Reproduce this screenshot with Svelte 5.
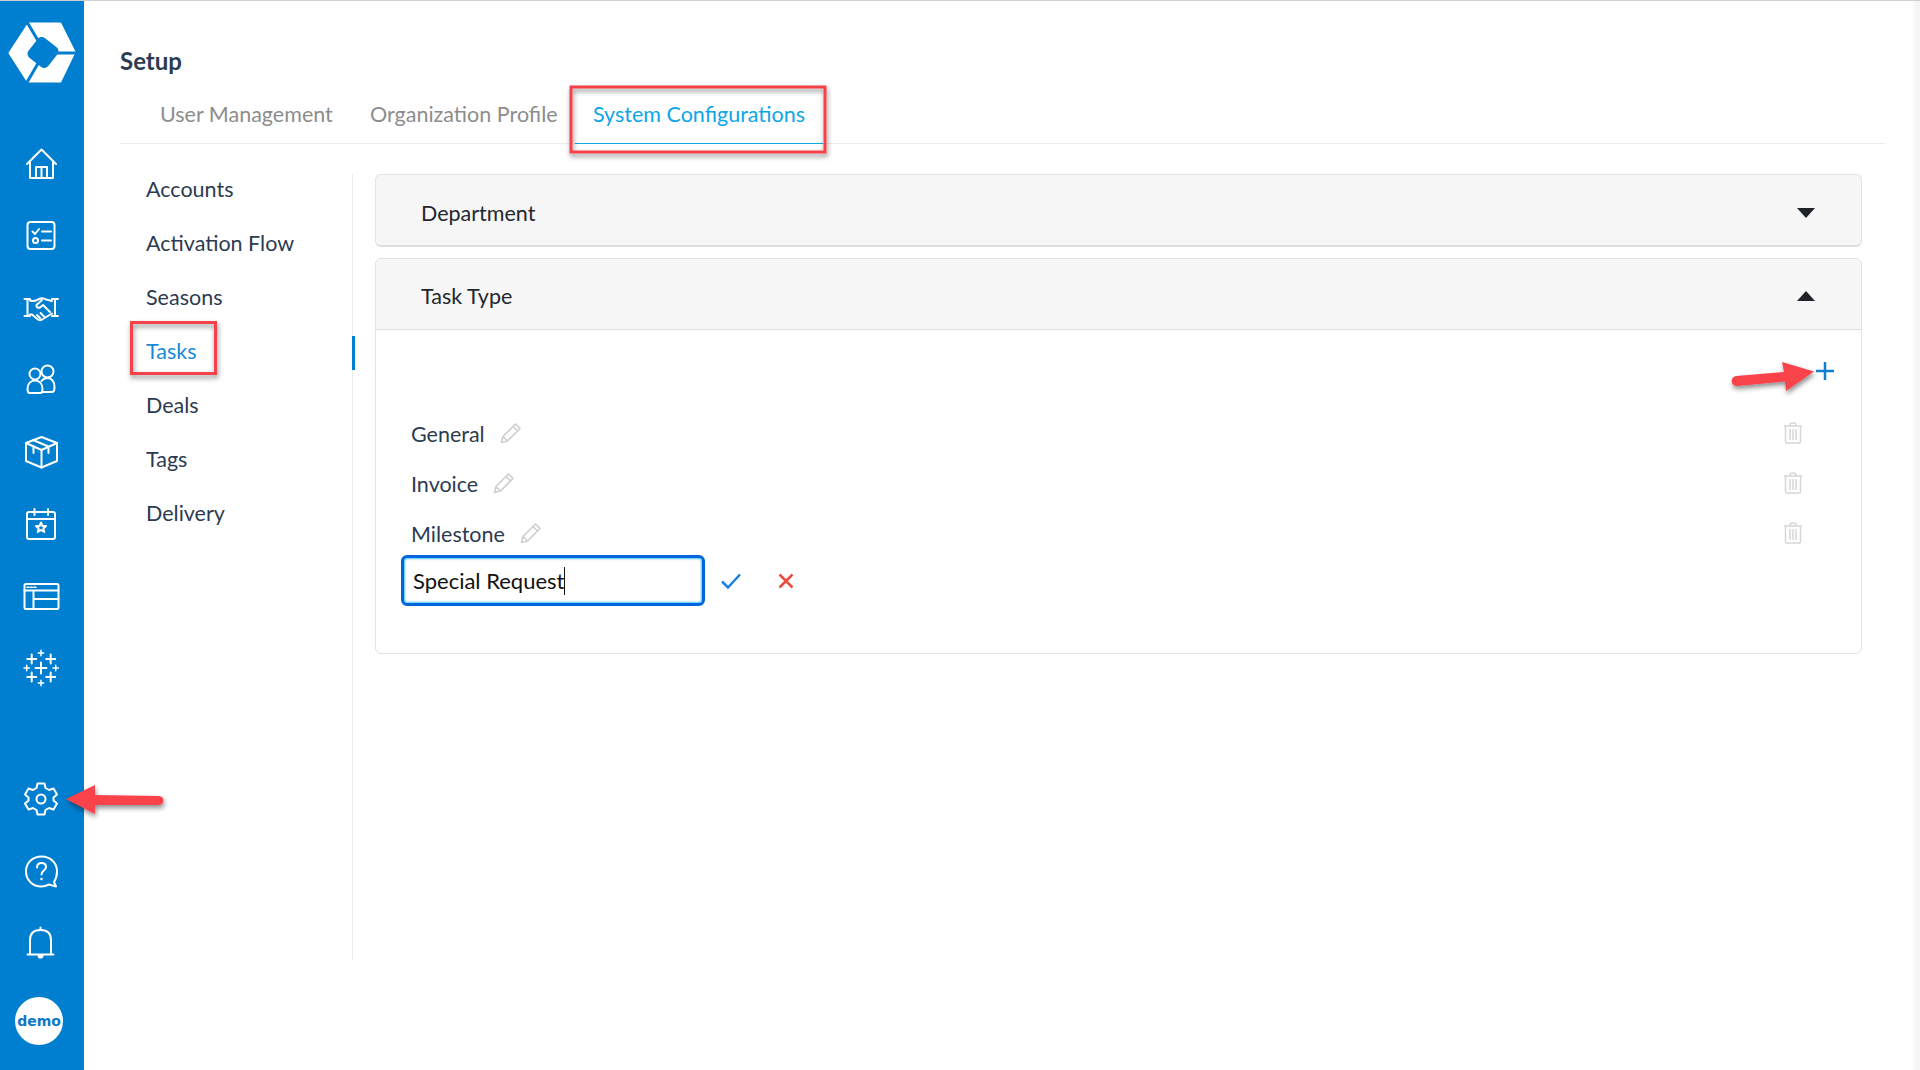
<script lang="ts">
    const sideItems = ["Accounts", "Activation Flow", "Seasons", "Tasks", "Deals", "Tags", "Delivery"];
    const taskTypes = ["General", "Invoice", "Milestone"];
    const bigSparks = [[10.7, 11], [29.7, 11], [10.7, 29], [29.7, 29]];
    const smallSparks = [[20, 5], [20, 35], [5.7, 20], [34.7, 20]];
</script>

<div class="page">
    <aside class="rail">
        <div class="logo">
            <svg width="84" height="100" viewBox="-1 0 84 100">
                <path class="logo-shape" d="M28 24H59L73 52L59 81H27L9 53Z" />
                <path class="logo-cut" d="M26 22L39 44M46 53H78M39 60L25 84" />
                <rect class="logo-core" x="29.500" y="40" width="25" height="25" rx="5" transform="rotate(38 42 52.500)" />
            </svg>
        </div>
        <div class="rail-group">
            <div class="rail-item">
                <svg viewBox="0 0 40 40"><path d="M6 20L20.500 5.500L35 20M9 18V34H32V18M15 34V23H26V34M20.500 23V34" /></svg>
            </div>
            <div class="rail-item">
                <svg viewBox="0 0 40 40">
                    <rect x="6.500" y="6" width="27" height="27" rx="3" />
                    <path d="M11.500 15.500L14 18L18 13M21 15.500H30M21 24.500H30" />
                    <circle cx="14.500" cy="24.500" r="2.500" />
                </svg>
            </div>
            <div class="rail-item">
                <svg viewBox="0 0 40 40">
                    <path d="M3.500 11H9M3.500 28H9M6.500 11V28M31 11H37M31 28H37M34 11V28" />
                    <path d="M9 12.500C12 13.500 15 13 18 11C20 10 23 10 25 11.500L31 13M9 26.500H11L17 31.500C18.500 32.500 20 32.500 21 31.500L31 25.500" />
                    <path d="M21 12L15.500 17C15 19 17 20.500 19 19.500L22 17L29 24M19.500 25L23 28.500M16 27L19 30" />
                </svg>
            </div>
            <div class="rail-item">
                <svg viewBox="0 0 40 40">
                    <circle cx="14" cy="14" r="5.500" />
                    <circle cx="26.500" cy="11.500" r="6" />
                    <path d="M8.500 33C6.500 33 6.500 31 6.500 29C6.500 24 9.500 20.500 14 20.500C18.500 20.500 21.500 24 21.500 29C21.500 31 21.500 33 19.500 33Z" />
                    <path d="M21.500 32H31C33 32 33.500 30 33.500 27C33.500 21.500 30.500 18 26.500 18C24 18 22 19 20.500 21" />
                </svg>
            </div>
            <div class="rail-item">
                <svg viewBox="0 0 40 40">
                    <path d="M20.500 5L36 11V29L20.500 35.500L5 29V11Z" />
                    <path d="M5 11L20.500 18L36 11M20.500 18V35.500M12 8L27.500 14.500V21" />
                    <path d="M12.500 14V21" />
                </svg>
            </div>
            <div class="rail-item">
                <svg viewBox="0 0 40 40">
                    <rect x="6" y="8" width="28" height="27" rx="2" />
                    <path d="M6 15H34M13.500 5V11M27 5V11" />
                    <path d="M20 18.500L21.500 22H25L22.300 24.400L23.300 28L20 26L16.700 28L17.700 24.400L15 22H18.500Z" />
                </svg>
            </div>
            <div class="rail-item">
                <svg viewBox="0 0 40 40">
                    <rect x="3.500" y="8" width="34" height="25" rx="1.500" />
                    <path d="M3.500 14.500H37.500M12.500 14.500V33M12.500 23H37.500" />
                    <path class="thin" d="M6 11.200H8M9.500 11.200H11.500M13 11.200H15" />
                </svg>
            </div>
            <div class="rail-item">
                <svg viewBox="0 0 40 40">
                    <path d="M20 14.500V25.500M14.500 20H25.500" />
                    {#each bigSparks as [x, y]}
                        <path d="M{x} {y - 4.5}V{y + 4.5}M{x - 4.5} {y}H{x + 4.5}" />
                    {/each}
                    {#each smallSparks as [x, y]}
                        <path class="thin" d="M{x} {y - 2.7}V{y + 2.7}M{x - 2.7} {y}H{x + 2.7}" />
                    {/each}
                </svg>
            </div>
        </div>
        <div class="rail-group rail-bottom">
            <div class="rail-item">
                <svg viewBox="0 0 40 40">
                    <g transform="translate(-0.500 -1)">
                        <path d="M17 5.500H24L25 10L28.500 12L33 10.500L36.500 16.500L33 19.500V22.500L36.500 25.500L33 31.500L28.500 30L25 32L24 36.500H17L16 32L12.500 30L8 31.500L4.500 25.500L8 22.500V19.500L4.500 16.500L8 10.500L12.500 12L16 10Z" />
                        <circle cx="20.500" cy="21" r="4.500" />
                    </g>
                </svg>
            </div>
            <div class="rail-item">
                <svg viewBox="0 0 40 40">
                    <path d="M20.500 5.500C11.500 5.500 5 12 5 20.500C5 29 11.500 35.500 20.500 35.500C24 35.500 26 34.500 28 33.500L35 35.500L33 31C35 28 36 24.500 36 20.500C36 12 29.500 5.500 20.500 5.500Z" />
                    <path d="M16 16.500C16 13.500 18 12 20.500 12C23 12 25 13.500 25 16C25 19.500 20.500 19.500 20.500 23.500" />
                    <circle class="dot" cx="20.500" cy="28" r="1.300" />
                </svg>
            </div>
            <div class="rail-item">
                <svg viewBox="0 0 40 40">
                    <path d="M9 31V17C9 10 13 7 19.500 7C26 7 30 10 30 17V31" />
                    <path d="M6.500 31.500H32.500M19.500 4.500V7" />
                    <path class="dot" d="M16.500 32H22.500C22.500 35 21 35.500 19.500 35.500C18 35.500 16.500 35 16.500 32Z" />
                </svg>
            </div>
            <div class="avatar">demo</div>
        </div>
    </aside>

    <main class="main">
        <h1>Setup</h1>
        <nav class="tabs">
            <div class="tab">User Management</div>
            <div class="tab">Organization Profile</div>
            <div class="tab active">System Configurations</div>
        </nav>

        <div class="body">
            <ul class="side">
                {#each sideItems as item}
                    <li class:current={item == "Tasks"}>{item}</li>
                {/each}
            </ul>

            <section class="content">
                <div class="acc-head closed">
                    <span>Department</span>
                    <span class="caret down"></span>
                </div>

                <div class="acc">
                    <div class="acc-head">
                        <span>Task Type</span>
                        <span class="caret up"></span>
                    </div>
                    <div class="panel">
                        <div class="add">
                            <svg width="20" height="20" viewBox="0 0 20 20"><path d="M10 1V19M1 10H19" /></svg>
                        </div>
                        {#each taskTypes as t}
                            <div class="type-row">
                                <span class="type-name">{t}</span>
                                <svg class="pencil" width="22" height="22" viewBox="0 0 22 22">
                                    <path d="M15.500 2L20 6.500L7.500 19L1.500 20.500L3 14.500Z M13 4.500L17.500 9 M3 14.500L7.500 19" />
                                </svg>
                                <svg class="trash" width="20" height="22" viewBox="0 0 20 22">
                                    <path d="M1 4H19M7 4V2.500C7 1.500 8 1 10 1C12 1 13 1.500 13 2.500V4M2.500 4V19.500C2.500 20.500 3 21 4 21H16C17 21 17.500 20.500 17.500 19.500V4M7 7V18M10 7V18M13 7V18" />
                                </svg>
                            </div>
                        {/each}
                        <div class="edit-row">
                            <div class="edit">Special Request<span class="cursor"></span></div>
                            <svg class="ok" width="22" height="18" viewBox="0 0 22 18"><path d="M2 9.500L8 15.500L20 2.500" /></svg>
                            <svg class="no" width="16" height="16" viewBox="0 0 16 16"><path d="M1.500 1.500L14.500 14.500M14.500 1.500L1.500 14.500" /></svg>
                        </div>
                    </div>
                </div>
            </section>
        </div>
    </main>

    <div class="edge"></div>

    <!-- red annotations on top of the screenshot -->
    <svg class="marks" width="1920" height="1070" viewBox="0 0 1920 1070">
        <defs>
            <filter id="sh" x="-20%" y="-20%" width="140%" height="150%">
                <feDropShadow dx="1" dy="3" stdDeviation="2.500" flood-color="#000" flood-opacity="0.45" />
            </filter>
        </defs>
        <rect class="box" x="571" y="87" width="254" height="65" filter="url(#sh)" />
        <rect class="box" x="131.500" y="322.500" width="84" height="51" filter="url(#sh)" />
        <path class="arrow" filter="url(#sh)" d="M1814 371.500L1782 362L1784 372L1736 376C1730 377 1730 386 1737 386L1785 381.500L1786 391Z" />
        <path class="arrow" filter="url(#sh)" d="M66 799L95 785V795L159 796C165 796 165 805 159 805L95 805V814Z" />
    </svg>
</div>

<style>
    :global(body) {
        margin: 0;
        background: #fff;
    }

    .page {
        position: relative;
        display: flex;
        width: 1920px;
        height: 1070px;
        overflow: hidden;
        border-top: 1px solid #cfcfcf;
        box-sizing: border-box;
        font-family: Lato, "Noto Sans", sans-serif;
        font-size: 21.500px;
        color: #2c3b50;
    }

    .rail {
        display: flex;
        flex-direction: column;
        width: 84px;
        flex-shrink: 0;
        background: #007ecf;
    }

    .logo {
        height: 100px;
        margin-top: -1px;
        margin-bottom: 28px;
    }

    .logo-shape {
        fill: #fff;
        stroke: #fff;
        stroke-width: 3;
        stroke-linejoin: round;
    }

    .logo-cut {
        fill: none;
        stroke: #007ecf;
        stroke-width: 3;
    }

    .logo-core {
        fill: #007ecf;
    }

    .rail-group {
        display: flex;
        flex-direction: column;
    }

    .rail-bottom {
        margin-top: auto;
        padding-bottom: 25px;
    }

    .rail-item {
        display: flex;
        align-items: center;
        justify-content: center;
        height: 72px;
        padding-right: 2px;
    }

    .rail-item svg {
        width: 40px;
        height: 40px;
        fill: none;
        stroke: #fff;
        stroke-width: 2;
        stroke-linecap: round;
        stroke-linejoin: round;
    }

    .rail-item .thin {
        stroke-width: 1.500;
    }

    .rail-item .dot {
        fill: #fff;
        stroke: none;
    }

    .avatar {
        display: flex;
        align-items: center;
        justify-content: center;
        width: 48px;
        height: 48px;
        margin: 18px 0 0 15px;
        border-radius: 50%;
        background: #fff;
        color: #0f78c8;
        font-family: "DejaVu Sans", sans-serif;
        font-size: 14px;
        font-weight: 700;
    }

    .main {
        flex: 1;
        display: flex;
        flex-direction: column;
        padding: 0 35px 0 36px;
    }

    h1 {
        margin: 47px 0 0;
        height: 27px;
        line-height: 26px;
        font-size: 24px;
        font-weight: 700;
    }

    .tabs {
        display: grid;
        grid-template-columns: 210px 223px 248px;
        height: 68px;
        padding-left: 22px;
        border-bottom: 1px solid #ececec;
    }

    .tab {
        display: flex;
        align-items: center;
        padding: 9px 0 0 18px;
        color: #8d8d8d;
    }

    .tab.active {
        height: 69px;
        box-sizing: border-box;
        border-bottom: 1px solid #0ea5e9;
        color: #0ea5e9;
    }

    .body {
        display: flex;
        height: 786px;
        margin-top: 30px;
    }

    .side {
        display: flex;
        flex-direction: column;
        gap: 20px;
        width: 232px;
        flex-shrink: 0;
        margin: 0;
        padding: 0;
        list-style: none;
        border-right: 1px solid #ececec;
    }

    .side li {
        height: 34px;
        line-height: 30px;
        margin-right: -3px;
        padding-left: 26px;
        border-right: 3px solid transparent;
    }

    .side li.current {
        color: #168ad8;
        border-right-color: #007ecf;
    }

    .content {
        flex: 1;
        display: flex;
        flex-direction: column;
        gap: 11px;
        margin-left: 22px;
        margin-right: 23px;
    }

    .acc {
        border: 1px solid #e2e2e2;
        border-radius: 6px;
        overflow: hidden;
    }

    .acc-head {
        display: flex;
        align-items: center;
        justify-content: space-between;
        height: 66px;
        padding: 4px 46px 0 45px;
        background: #f6f6f6;
        border-bottom: 1px solid #dedede;
        color: #23272e;
    }

    .acc-head.closed {
        height: 65px;
        padding-top: 5px;
        border: 1px solid #e2e2e2;
        border-bottom: 2px solid #dedede;
        border-radius: 6px;
    }

    .caret {
        width: 0;
        height: 0;
        border-left: 9px solid transparent;
        border-right: 9px solid transparent;
    }

    .caret.down {
        border-top: 10px solid #1f2329;
    }

    .caret.up {
        border-bottom: 10px solid #1f2329;
    }

    .panel {
        display: flex;
        flex-direction: column;
        box-sizing: border-box;
        height: 323px;
        padding: 31px 58px 0 35px;
    }

    .add {
        display: flex;
        justify-content: flex-end;
        height: 48px;
        margin-right: -32px;
    }

    .add svg {
        fill: none;
        stroke: #0f7fd0;
        stroke-width: 2.500;
    }

    .type-row {
        display: flex;
        align-items: center;
        gap: 15px;
        height: 50px;
    }

    .pencil {
        margin-top: -3px;
        fill: none;
        stroke: #cfcfcf;
        stroke-width: 1.700;
        stroke-linejoin: round;
    }

    .trash {
        margin-left: auto;
        margin-top: -2px;
        fill: none;
        stroke: #d6d6d6;
        stroke-width: 1.500;
    }

    .edit-row {
        display: flex;
        align-items: center;
        margin: -4px 0 0 -10px;
    }

    .edit {
        display: flex;
        align-items: center;
        box-sizing: border-box;
        width: 304px;
        height: 51px;
        padding-left: 9px;
        border: 3px solid #0066dd;
        border-radius: 6px;
        box-shadow: inset 0 0 2px 1px #4fc3f7;
        color: #111;
        font-size: 22px;
    }

    .cursor {
        width: 1px;
        height: 28px;
        background: #111;
    }

    .ok {
        margin-left: 15px;
        fill: none;
        stroke: #1a7fe8;
        stroke-width: 2.500;
    }

    .no {
        margin-left: 36px;
        fill: none;
        stroke: #ec4c3f;
        stroke-width: 2.500;
    }

    .edge {
        position: absolute;
        top: 0;
        right: 0;
        bottom: 0;
        width: 9px;
        background: linear-gradient(to right, #fff, #f4f4f4 70%);
    }

    .marks {
        position: absolute;
        top: -1px;
        left: 0;
        pointer-events: none;
    }

    .box {
        fill: none;
        stroke: #f5424a;
        stroke-width: 3;
    }

    .arrow {
        fill: #f9424a;
    }
</style>
